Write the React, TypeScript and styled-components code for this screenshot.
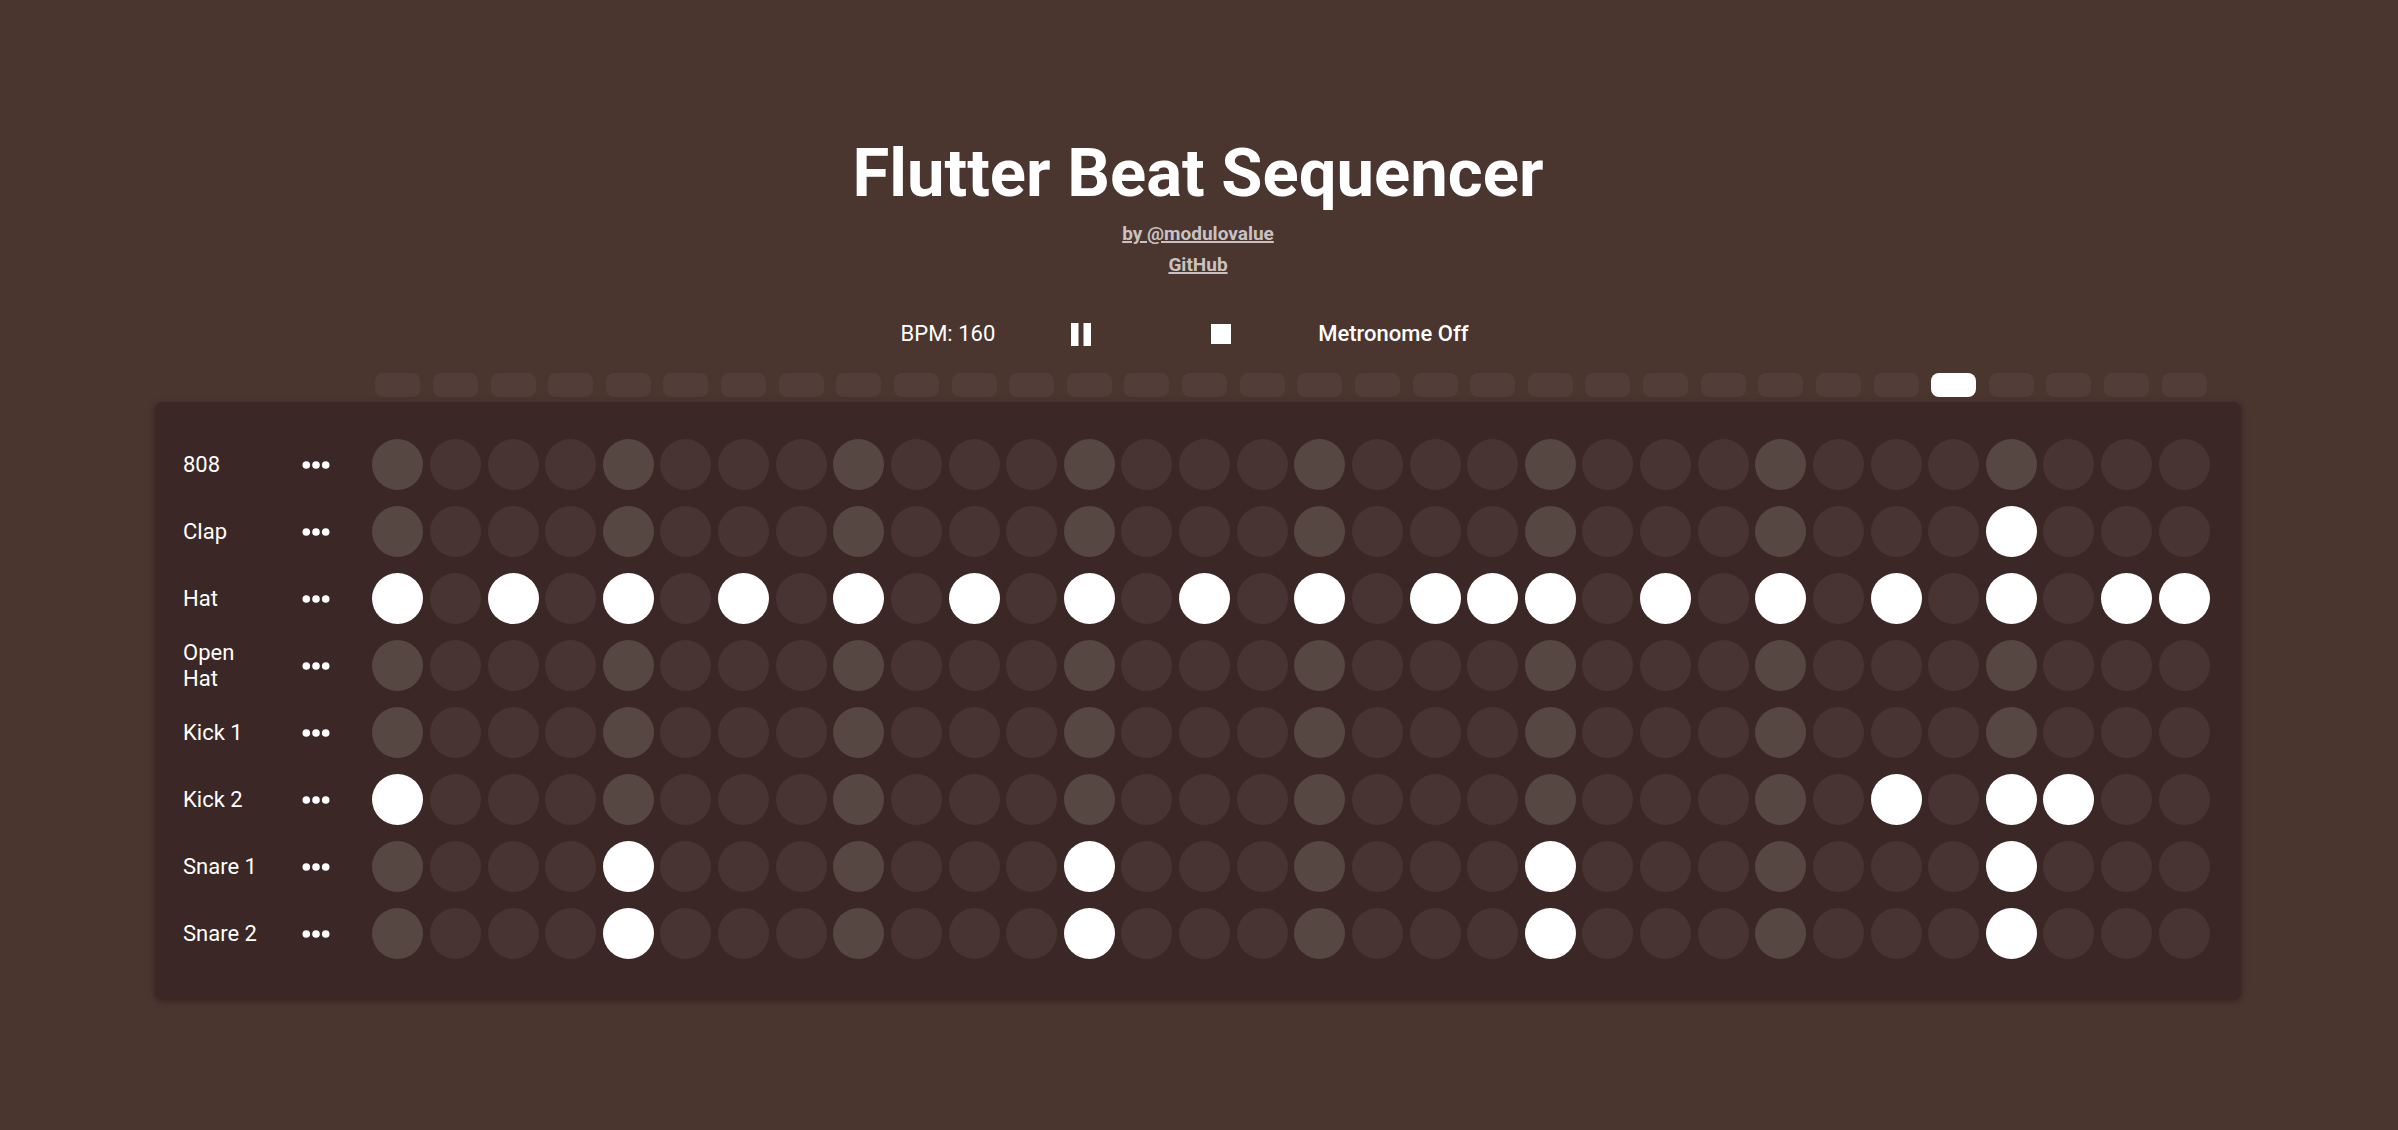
import React, { useState } from "react";
import styled, { createGlobalStyle } from "styled-components";

const STEPS = 32;
const CURRENT_STEP = 27;

const TRACKS: { name: string; hits: number[] }[] = [
  { name: "808", hits: [] },
  { name: "Clap", hits: [28] },
  { name: "Hat", hits: [0, 2, 4, 6, 8, 10, 12, 14, 16, 18, 19, 20, 22, 24, 26, 28, 30, 31] },
  { name: "Open Hat", hits: [] },
  { name: "Kick 1", hits: [] },
  { name: "Kick 2", hits: [0, 26, 28, 29] },
  { name: "Snare 1", hits: [4, 12, 20, 28] },
  { name: "Snare 2", hits: [4, 12, 20, 28] },
];

const GlobalStyle = createGlobalStyle`
  * { box-sizing: border-box; }
  body {
    margin: 0;
    background: #4a352f;
    color: #fff;
    font-family: Roboto, "Liberation Sans", sans-serif;
  }
`;

const Page = styled.main`
  min-height: 100vh;
  padding: 0 157px 0 155px;
  display: flex;
  flex-direction: column;
  justify-content: center;
`;

const Header = styled.header`
  display: flex;
  flex-direction: column;
  align-items: center;
`;

const Title = styled.h1`
  margin: 0 0 3px;
  font-size: 67px;
  line-height: 84px;
  font-weight: 700;
`;

const Credit = styled.a`
  font-size: 19px;
  line-height: 31px;
  font-weight: 700;
  color: #c9c2c0;
  text-decoration: underline;
  text-decoration-thickness: 2px;
`;

const Controls = styled.div`
  margin: 19px 0 4px;
  height: 70px;
  display: flex;
  justify-content: center;
  align-items: center;
  font-size: 22px;
  line-height: 26px;
`;

const Bpm = styled.span`
  margin-right: 16px;
`;

const PlainButton = styled.button`
  border: 0;
  padding: 0;
  background: none;
  color: inherit;
  font: inherit;
  cursor: pointer;
`;

const TransportButton = styled(PlainButton)`
  width: 140px;
  height: 60px;
  display: flex;
  justify-content: center;
  align-items: center;
`;

const MetronomeButton = styled(PlainButton)`
  height: 60px;
  padding: 0 27px;
  font-weight: 500;
`;

const Steps = styled.div`
  flex: 1;
  display: grid;
  grid-template-columns: repeat(${STEPS}, minmax(0, 1fr));
  justify-items: center;
  align-items: center;
`;

const LampRow = styled.div`
  display: flex;
  padding: 0 28px 0 214px;
  margin-bottom: 5px;
`;

const Lamp = styled.span<{ $lit: boolean }>`
  width: 45px;
  height: 24px;
  border-radius: 8px;
  background: ${(p) => (p.$lit ? "#fff" : "#523e38")};
`;

const Panel = styled.section`
  padding: 29px 28px 32px;
  border-radius: 7px;
  background: #3b2725;
  box-shadow: 0 2px 4px rgba(0, 0, 0, 0.2), 0 1px 10px rgba(0, 0, 0, 0.14);
`;

const TrackRow = styled.div`
  display: flex;
  align-items: center;
  height: 67px;
`;

const TrackName = styled.div`
  width: 96px;
  padding-right: 16px;
  font-size: 22px;
  line-height: 26px;
`;

const MoreButton = styled(PlainButton)`
  width: 74px;
  height: 48px;
  margin-right: 16px;
  display: flex;
  justify-content: center;
  align-items: center;
`;

const Pad = styled(PlainButton)<{ $on: boolean; $accent: boolean }>`
  width: 51px;
  height: 51px;
  border-radius: 50%;
  background: ${(p) => (p.$on ? "#fff" : p.$accent ? "#564743" : "#483533")};
`;

const MoreIcon = () => (
  <svg width="28" height="8" viewBox="0 0 28 8" fill="currentColor" aria-hidden="true">
    <circle cx="4.3" cy="4" r="3.8" />
    <circle cx="14" cy="4" r="3.8" />
    <circle cx="23.7" cy="4" r="3.8" />
  </svg>
);

const PauseIcon = () => (
  <svg width="20" height="23" viewBox="0 0 20 23" fill="currentColor" aria-hidden="true">
    <rect width="7.5" height="23" />
    <rect x="12.5" width="7.5" height="23" />
  </svg>
);

const StopIcon = () => (
  <svg width="20" height="20" viewBox="0 0 20 20" fill="currentColor" aria-hidden="true">
    <rect width="20" height="20" />
  </svg>
);

export default function App() {
  const [grid, setGrid] = useState(() =>
    TRACKS.map((t) => Array.from({ length: STEPS }, (_, i) => t.hits.includes(i)))
  );

  const toggle = (row: number, step: number) =>
    setGrid((g) => g.map((r, i) => (i === row ? r.map((v, j) => (j === step ? !v : v)) : r)));

  return (
    <>
      <GlobalStyle />
      <Page>
        <Header>
          <Title>Flutter Beat Sequencer</Title>
          <Credit href="#author">by @modulovalue</Credit>
          <Credit href="#github">GitHub</Credit>
        </Header>
        <Controls>
          <Bpm>BPM: 160</Bpm>
          <TransportButton type="button" aria-label="Pause">
            <PauseIcon />
          </TransportButton>
          <TransportButton type="button" aria-label="Stop">
            <StopIcon />
          </TransportButton>
          <MetronomeButton type="button">Metronome Off</MetronomeButton>
        </Controls>
        <LampRow>
          <Steps>
            {Array.from({ length: STEPS }, (_, i) => (
              <Lamp key={i} $lit={i === CURRENT_STEP} />
            ))}
          </Steps>
        </LampRow>
        <Panel>
          {TRACKS.map((track, row) => (
            <TrackRow key={track.name}>
              <TrackName>{track.name}</TrackName>
              <MoreButton type="button" aria-label={`${track.name} options`}>
                <MoreIcon />
              </MoreButton>
              <Steps>
                {grid[row].map((on, step) => (
                  <Pad
                    key={step}
                    type="button"
                    $on={on}
                    $accent={step % 4 === 0}
                    aria-pressed={on}
                    aria-label={`${track.name} step ${step + 1}`}
                    onClick={() => toggle(row, step)}
                  />
                ))}
              </Steps>
            </TrackRow>
          ))}
        </Panel>
      </Page>
    </>
  );
}
